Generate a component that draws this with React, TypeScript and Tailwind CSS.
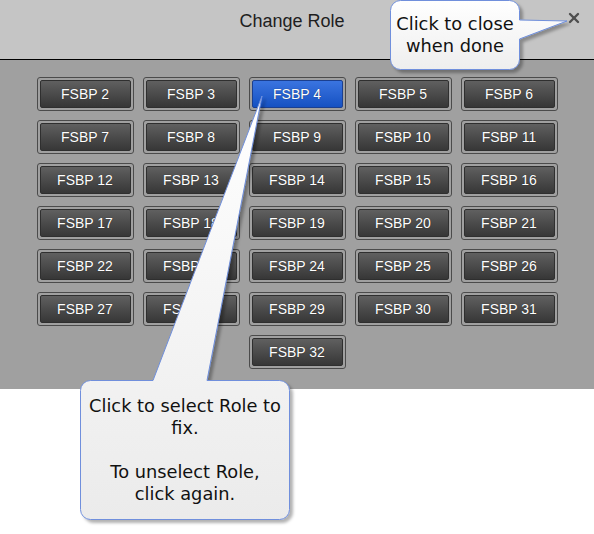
import React from 'react';

const roles = Array.from({ length: 31 }, (_, i) => i + 2);
const SELECTED = 4;

function RoleButton({ n, selected }: { n: number; selected: boolean }) {
  return (
    <div className="w-[97px] h-[34px] rounded-[3px] border border-[#4b4b4b] p-[2px]">
      <div
        className={`h-full rounded-[2px] border flex items-center justify-center text-white text-[14px] [text-shadow:0_0_1px_rgba(0,0,0,0.6)] ${
          selected
            ? 'border-[#1b3f8f] bg-gradient-to-b from-[#3a74e0] to-[#1551c2]'
            : 'border-[#2f2f2f] bg-gradient-to-b from-[#606060] to-[#373737]'
        }`}
      >
        FSBP {n}
      </div>
    </div>
  );
}

function Callouts() {
  return (
    <svg className="absolute inset-0 pointer-events-none" width={594} height={534}>
      <defs>
        <linearGradient id="tip1" x1="0" y1="0" x2="0" y2="70" gradientUnits="userSpaceOnUse">
          <stop offset="0" stopColor="#ffffff" />
          <stop offset="1" stopColor="#eeeeee" />
        </linearGradient>
        <linearGradient id="tip2" x1="0" y1="96" x2="0" y2="520" gradientUnits="userSpaceOnUse">
          <stop offset="0" stopColor="#ffffff" />
          <stop offset="1" stopColor="#ebebeb" />
        </linearGradient>
        <filter id="shadow" x="-20%" y="-20%" width="140%" height="140%">
          <feDropShadow dx="3" dy="3" stdDeviation="1.5" floodColor="#000" floodOpacity="0.3" />
        </filter>
      </defs>
      <path
        d="M400.5 0.5 H509.5 A10 10 0 0 1 519.5 10.5 V20 L567 21 L519.5 39 V59.5 A10 10 0 0 1 509.5 69.5 H400.5 A10 10 0 0 1 390.5 59.5 V10.5 A10 10 0 0 1 400.5 0.5 Z"
        fill="url(#tip1)"
        stroke="#6f8fdc"
        strokeWidth="1"
        filter="url(#shadow)"
      />
      <path
        d="M90.5 380.5 H153 L262 96 L207 380.5 H279.5 A10 10 0 0 1 289.5 390.5 V509.5 A10 10 0 0 1 279.5 519.5 H90.5 A10 10 0 0 1 80.5 509.5 V390.5 A10 10 0 0 1 90.5 380.5 Z"
        fill="url(#tip2)"
        stroke="#6f8fdc"
        strokeWidth="1"
        filter="url(#shadow)"
      />
      {/* close icon */}
      <g stroke="#4f4f4f" strokeWidth="2.4" strokeLinecap="round">
        <line x1="570" y1="14" x2="578" y2="22" />
        <line x1="578" y1="14" x2="570" y2="22" />
      </g>
    </svg>
  );
}

export default function App() {
  return (
    <div className="relative w-[594px] h-[534px] bg-white overflow-hidden font-['Liberation_Sans',Arial,sans-serif]">
      <div className="h-[60px] bg-[#c5c5c5] border-b border-black flex items-center justify-center pr-[10px]">
        <h1 className="text-[18px] text-[#1e1e1e] -mt-[16px]">Change Role</h1>
      </div>

      <div className="bg-[#a0a0a0] pt-[17px] pb-[20px] flex justify-center">
        <div className="w-[521px] flex flex-wrap justify-center gap-[9px]">
          {roles.map((n) => (
            <RoleButton key={n} n={n} selected={n === SELECTED} />
          ))}
        </div>
      </div>

      <Callouts />

      <div className="absolute left-[390px] top-0 w-[130px] h-[70px] flex items-center justify-center text-center text-[17.8px] leading-[22px] text-[#111] font-['DejaVu_Sans',Verdana,sans-serif]">
        <p>
          Click to close
          <br />
          when done
        </p>
      </div>

      <div className="absolute left-[80px] top-[380px] w-[210px] h-[140px] flex items-center justify-center text-center text-[17.8px] leading-[22px] text-[#111] font-['DejaVu_Sans',Verdana,sans-serif]">
        <p>
          Click to select Role to
          <br />
          fix.
          <br />
          <br />
          To unselect Role,
          <br />
          click again.
        </p>
      </div>
    </div>
  );
}
